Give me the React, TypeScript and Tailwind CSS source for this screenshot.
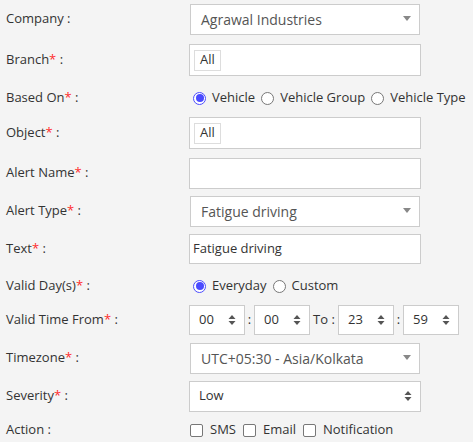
const font = "font-['Open_Sans','Liberation_Sans',sans-serif]";

function Label({ text, required }: { text: string; required?: boolean }) {
    return (
        <div className="w-[189px] shrink-0 pl-[6px] text-[13px] text-[#333]">
            {text}
            {required && <span className="text-[#ff2b2b]">*</span>} :
        </div>
    );
}

function Caret() {
    return (
        <svg width="8" height="6" viewBox="0 0 8 6" className="absolute right-[8px] top-1/2 -translate-y-1/2">
            <path d="M0 0 L8 0 L4 5 Z" fill="#888" />
        </svg>
    );
}

function UpDown() {
    return (
        <svg width="8" height="12" viewBox="0 0 8 12" className="absolute right-[8px] top-1/2 -translate-y-1/2">
            <path d="M0.5 5 L7.5 5 L4 1 Z" fill="#555" />
            <path d="M0.5 7 L7.5 7 L4 11 Z" fill="#555" />
        </svg>
    );
}

function Select2({ value }: { value: string }) {
    return (
        <div className="relative ml-px flex h-[31px] w-[230px] items-center border border-[#ccc] bg-white pl-[10px] text-[14px] text-[#555]">
            {value}
            <Caret />
        </div>
    );
}

function TagInput() {
    return (
        <div className="flex h-[32px] w-[232px] items-center border border-[#ccc] bg-white pl-[4px]">
            <span className="flex h-[21px] items-center border border-[#ddd] px-[5px] text-[13px] text-[#333]">All</span>
        </div>
    );
}

function Radio({ checked, label }: { checked?: boolean; label: string }) {
    return (
        <span className="flex items-center">
            {checked ? (
                <span className="flex h-[13px] w-[13px] items-center justify-center rounded-full border border-[#4b4bff] bg-white">
                    <span className="h-[8px] w-[8px] rounded-full bg-[#4b4bff]" />
                </span>
            ) : (
                <span className="h-[13px] w-[13px] rounded-full border border-[#777] bg-white" />
            )}
            <span className="ml-[6px] text-[13px] text-[#333]">{label}</span>
        </span>
    );
}

function Check({ label }: { label: string }) {
    return (
        <span className="flex items-center">
            <span className="h-[13px] w-[13px] rounded-[2px] border border-[#777] bg-white" />
            <span className="ml-[7px] text-[13px] text-[#333]">{label}</span>
        </span>
    );
}

function TimeBox({ value }: { value: string }) {
    return (
        <div className="relative flex h-[30px] w-[56px] items-center border border-[#ccc] bg-white pl-[9px] text-[13px] text-[#333]">
            {value}
            <UpDown />
        </div>
    );
}

export default function App() {
    return (
        <div className={`${font} h-[442px] w-[473px] bg-[#f4f4f4]`}>
            <div className="flex h-[38px] items-center">
                <Label text="Company" />
                <Select2 value="Agrawal Industries" />
            </div>
            <div className="flex h-[44px] items-center">
                <Label text="Branch" required />
                <TagInput />
            </div>
            <div className="flex h-[32px] items-center">
                <Label text="Based On" required />
                <div className="ml-[4px] flex items-center gap-[6px]">
                    <Radio checked label="Vehicle" />
                    <Radio label="Vehicle Group" />
                    <Radio label="Vehicle Type" />
                </div>
            </div>
            <div className="flex h-[38px] items-center">
                <Label text="Object" required />
                <TagInput />
            </div>
            <div className="flex h-[42px] items-center">
                <Label text="Alert Name" required />
                <div className="h-[31px] w-[232px] border border-[#ccc] bg-white" />
            </div>
            <div className="flex h-[34px] items-center">
                <Label text="Alert Type" required />
                <Select2 value="Fatigue driving" />
            </div>
            <div className="flex h-[42px] items-center">
                <Label text="Text" required />
                <div className="flex h-[30px] w-[232px] items-center border border-[#ccc] bg-white pl-[3px] text-[13px] text-[#333]">
                    Fatigue driving
                </div>
            </div>
            <div className="flex h-[32px] items-center">
                <Label text="Valid Day(s)" required />
                <div className="ml-[4px] flex items-center gap-[6px]">
                    <Radio checked label="Everyday" />
                    <Radio label="Custom" />
                </div>
            </div>
            <div className="flex h-[36px] items-center">
                <Label text="Valid Time From" required />
                <div className="flex items-center text-[13px] text-[#333]">
                    <TimeBox value="00" />
                    <span className="w-[9px] text-center">:</span>
                    <TimeBox value="00" />
                    <span className="w-[28px] text-center">To :</span>
                    <TimeBox value="23" />
                    <span className="w-[9px] text-center">:</span>
                    <TimeBox value="59" />
                </div>
            </div>
            <div className="flex h-[40px] items-center">
                <Label text="Timezone" required />
                <Select2 value="UTC+05:30 - Asia/Kolkata" />
            </div>
            <div className="flex h-[36px] items-center">
                <Label text="Severity" required />
                <div className="relative flex h-[31px] w-[232px] items-center border border-[#ccc] bg-white pl-[9px] text-[13px] text-[#333]">
                    Low
                    <UpDown />
                </div>
            </div>
            <div className="flex h-[32px] items-center">
                <Label text="Action" />
                <div className="ml-[1px] flex items-center gap-[7px]">
                    <Check label="SMS" />
                    <Check label="Email" />
                    <Check label="Notification" />
                </div>
            </div>
        </div>
    );
}
